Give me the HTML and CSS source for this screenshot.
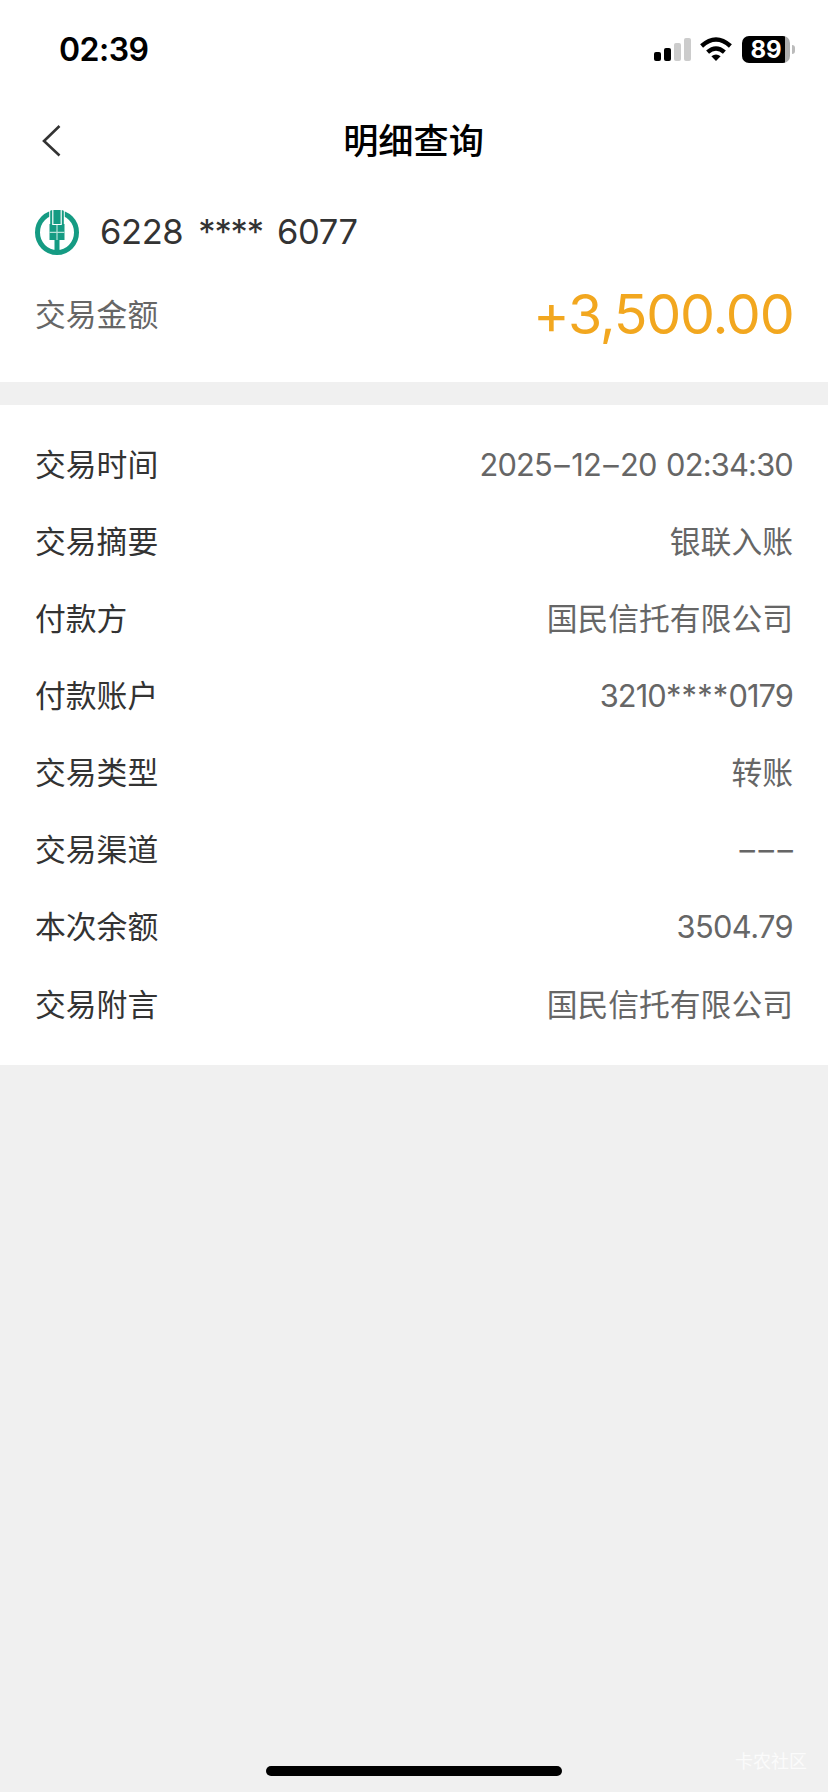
FILE: index.html
```html
<!DOCTYPE html>
<html lang="zh-CN">
<head>
<meta charset="utf-8">
<title>明细查询</title>
<link rel="stylesheet" href="styles.css">
</head>
<body>
<div class="screen">
  <div class="status">
    <span class="clock">02:39</span>
    <div class="status-icons">
      <svg class="signal" width="38" height="24" viewBox="0 0 38 24">
        <rect x="0" y="14" width="7" height="9" rx="2"/>
        <rect x="10" y="10" width="7" height="13" rx="2"/>
        <rect class="dim" x="20" y="5" width="7" height="18" rx="2"/>
        <rect class="dim" x="30" y="0" width="7" height="23" rx="2"/>
      </svg>
      <svg class="wifi" width="32" height="24" viewBox="0 0 32 24">
        <path d="M16 24L11.4 19.3Q16 15.7 20.6 19.3Z"/>
        <path class="arc" d="M7.6 15.2Q16 7.8 24.4 15.2"/>
        <path class="arc" d="M1.6 9Q16 -4 30.4 9"/>
      </svg>
      <div class="battery"><div class="battery-body">89</div><div class="battery-tip"></div></div>
    </div>
  </div>
  <header class="nav">
    <svg class="back" width="20" height="32" viewBox="0 0 20 32"><path d="M17.500 1L2 16L17.500 30.500"/></svg>
    <h1 class="title">明细查询</h1>
  </header>
  <section class="summary">
    <div class="card">
      <svg class="logo" width="44" height="45" viewBox="0 0 44 45">
        <ellipse class="ring" cx="22" cy="22.5" rx="19.5" ry="20"/>
        <path class="gap" d="M14.200 0H29.800V14H14.200Z"/>
        <path d="M15.200 .8V14H14.500V30H19.500V42H24.500V30H29.500V14H28.800V.8L26.800 0V15H17.200V0Z"/>
        <path d="M18.400 0H25.600V14H18.400Z"/>
        <path class="seam" d="M22 15V30M14.500 22.300H29.500"/>
      </svg>
      <div class="number"><span>6228</span><span class="stars">****</span><span>6077</span></div>
    </div>
    <div class="total">
      <span class="total-label">交易金额</span>
      <span class="amount">+3,500.00</span>
    </div>
  </section>
  <section class="details">
    <div class="row"><span>交易时间</span><span class="value date">2025<span class="dash">–</span>12<span class="dash">–</span>20 02:34:30</span></div>
    <div class="row"><span>交易摘要</span><span class="value">银联入账</span></div>
    <div class="row"><span>付款方</span><span class="value">国民信托有限公司</span></div>
    <div class="row"><span>付款账户</span><span class="value account">3210<span class="mask">****</span>0179</span></div>
    <div class="row"><span>交易类型</span><span class="value">转账</span></div>
    <div class="row"><span>交易渠道</span><span class="value dashes">–––</span></div>
    <div class="row"><span>本次余额</span><span class="value balance">3504.79</span></div>
    <div class="row"><span>交易附言</span><span class="value">国民信托有限公司</span></div>
  </section>
  <footer class="bottom">
    <div class="home-bar"></div>
    <span class="watermark">卡农社区</span>
  </footer>
</div>
</body>
</html>
```
FILE: styles.css
```css
* { box-sizing: border-box; }
body { margin: 0; background: #f0f0f0; font-family: Inter, "Noto Sans CJK SC", sans-serif; color: #333; }
.screen { width: 828px; height: 1792px; display: flex; flex-direction: column; overflow: hidden; }
.status { height: 100px; background: #fff; display: flex; justify-content: space-between; padding: 0 33px 0 59px; color: #000; }
.clock { font-size: 32px; line-height: 38px; font-weight: 600; letter-spacing: -.5px; margin-top: 31px; }
.status-icons { display: flex; align-items: flex-start; padding-top: 36px; }
.signal { margin: 2px 8px 0 0; }
.signal .dim { fill: #ccc; }
.wifi { margin: 1px 10px 0 0; }
.wifi .arc { fill: none; stroke: #000; stroke-width: 4.4; }
.battery { display: flex; align-items: center; gap: 2px; }
.battery-body { width: 48px; height: 27px; border-radius: 7px; background: linear-gradient(90deg, #000 43px, #adadad 43px); color: #fff; font-size: 24px; line-height: 27px; font-weight: 700; text-align: center; }
.battery-tip { width: 3px; height: 9px; border-radius: 0 4px 4px 0; background: #bbb; }
.nav { height: 82px; background: #fff; display: grid; grid-template-columns: 100px 1fr 101px; align-items: center; }
.back { margin: 0 0 1px 42px; fill: none; stroke: #333; stroke-width: 2.6; }
.title { margin: 0; text-align: center; color: #000; font-size: 35.2px; line-height: 50px; font-weight: 500; }
.summary { height: 200px; background: #fff; padding: 0 35px; }
.card { height: 100px; display: flex; align-items: center; }
.logo { fill: #159b83; }
.logo .ring { fill: none; stroke: #159b83; stroke-width: 5; }
.logo .gap { fill: #fff; }
.logo .seam { stroke: #b5e2d8; stroke-width: 1.2; }
.number { display: flex; margin-left: 21px; font-size: 34.5px; line-height: 42px; letter-spacing: -.4px; }
.stars { margin: 0 14px 0 15px; letter-spacing: -1.1px; }
.total { height: 64px; display: flex; justify-content: space-between; align-items: center; }
.total-label { font-size: 30.8px; color: #666; margin-top: -3px; }
.amount { font-size: 55.5px; line-height: 64px; color: #f2a71f; letter-spacing: -1.200px; margin-right: -.5px; }
.details { height: 660px; margin-top: 23px; padding: 21px 35px 22px; background: #fff; }
.row { height: 77.15px; display: flex; justify-content: space-between; align-items: center; font-size: 30.8px; line-height: 46px; }
.value { color: #666; }
.date, .account, .balance { letter-spacing: -.9px; }
.date { letter-spacing: -.8px; word-spacing: 1.5px; }
.balance { letter-spacing: -.6px; }
.mask { letter-spacing: .2px; }
.dash { padding: 0 2.3px; }
.dashes { letter-spacing: 3.6px; margin-right: -3.6px; }
.bottom { flex: 1; display: grid; grid-template-columns: 1fr 296px 1fr; align-items: end; }
.home-bar { grid-column: 2; height: 10px; border-radius: 5px; background: #000; margin-bottom: 16px; }
.watermark { justify-self: end; margin: 0 21px 17px 0; font-size: 18px; line-height: 26px; color: #fbfbfb; }
```
